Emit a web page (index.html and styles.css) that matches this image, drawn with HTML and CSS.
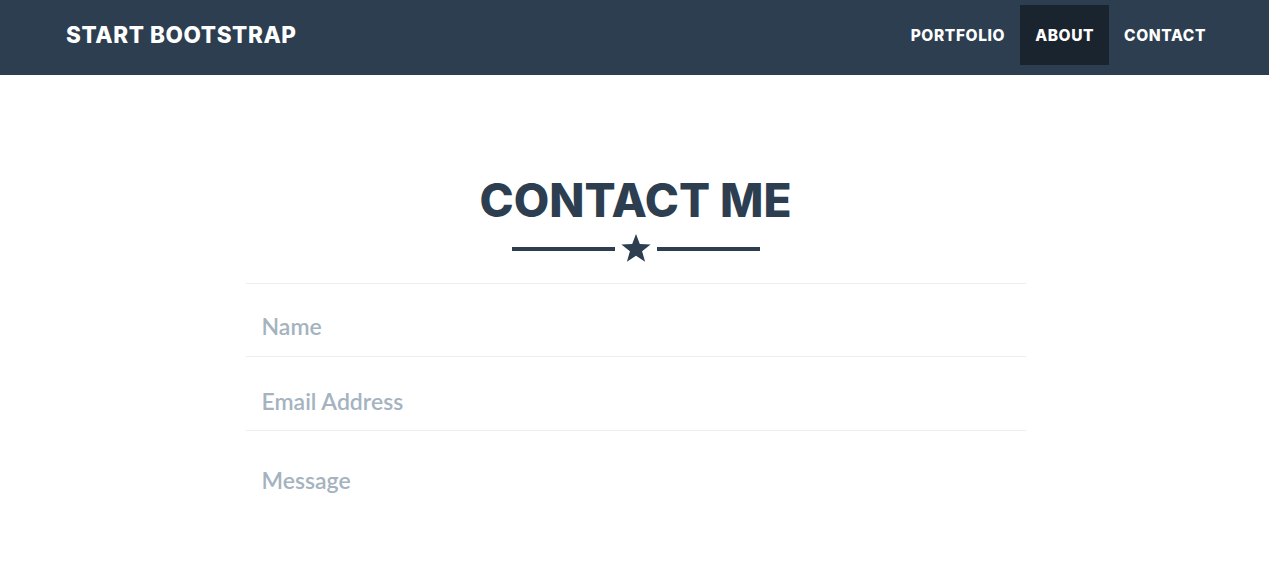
FILE: index.html
```html
<html>
<head>
  <title>Start Bootstrap - Contact</title>
  <meta name="viewport" content="width=device-width, minimum-scale=1.0"/>
  <meta http-equiv="Content-Type" content="text/html; charset=utf-8">
  <link rel="stylesheet" href="styles.css">
</head>
<body>
  <nav class="navbar">
    <a class="brand" href="#">Start Bootstrap</a>
    <ul class="nav-links">
      <li><a href="#portfolio">Portfolio</a></li>
      <li><a class="active" href="#about">About</a></li>
      <li><a href="#contact">Contact</a></li>
    </ul>
  </nav>
  <section class="contact">
    <h2>Contact Me</h2>
    <div class="star-divider">
      <span class="line"></span>
      <svg class="star" width="30" height="29" viewBox="0 0 30 29">
        <polygon points="15,0 18.8,10.1 29.6,10.6 21.1,17.3 24.1,27.8 15,21.8 5.9,27.8 8.9,17.3 0.4,10.6 11.2,10.1" fill="#2c3e50"/>
      </svg>
      <span class="line"></span>
    </div>
    <form class="contact-form">
      <div class="field"><input type="text" placeholder="Name"></div>
      <div class="field"><input type="email" placeholder="Email Address"></div>
      <div class="field last"><textarea placeholder="Message"></textarea></div>
    </form>
  </section>
</body>
</html>
```

FILE: styles.css
```css
html {
  box-sizing: border-box;
}
*, *:before, *:after {
  box-sizing: inherit;
}
body {
  margin: 0;
  padding: 0;
  font-family: "Lato", "Liberation Sans", sans-serif;
  background: #fff;
  overflow: hidden;
}
.navbar {
  height: 75px;
  background: #2c3e50;
  display: flex;
  align-items: center;
  justify-content: space-between;
  padding: 0 48px 0 66px;
}
.brand {
  font-family: "Inter", "Liberation Sans", sans-serif;
  font-weight: 800;
  font-size: 22.5px;
  letter-spacing: 0.6px;
  text-transform: uppercase;
  color: #fff;
  text-decoration: none;
  margin-top: -7px;
}
.nav-links {
  list-style: none;
  margin: 0;
  padding: 0;
  display: flex;
  align-items: center;
  height: 75px;
}
.nav-links a {
  display: block;
  height: 60px;
  line-height: 61px;
  padding: 0 15px;
  margin-top: -5px;
  font-family: "Inter", "Liberation Sans", sans-serif;
  font-weight: 800;
  font-size: 15.5px;
  letter-spacing: 0.6px;
  text-transform: uppercase;
  color: #fff;
  text-decoration: none;
}
.nav-links a.active {
  background: #1a242f;
}
.contact {
  width: 780px;
  margin: 0 auto;
  padding-top: 100px;
  position: relative;
  left: 1px;
}
.contact h2 {
  margin: 0;
  text-align: center;
  font-family: "Inter", "Liberation Sans", sans-serif;
  font-weight: 800;
  font-size: 46px;
  line-height: 50px;
  letter-spacing: 0;
  text-transform: uppercase;
  color: #2c3e50;
}
.star-divider {
  display: flex;
  justify-content: center;
  align-items: center;
  gap: 6px;
  margin-top: 9px;
  height: 30px;
}
.star-divider .line {
  width: 103px;
  height: 4px;
  background: #2c3e50;
}
.star {
  display: block;
  margin-top: -2px;
}
.contact-form {
  margin-top: 19px;
  border-top: 1px solid #eeeeee;
}
.field {
  height: 73px;
  border-bottom: 1px solid #eeeeee;
  display: flex;
  align-items: center;
  padding-top: 12px;
}
.field + .field {
  height: 74px;
  padding-top: 14px;
}
.field.last {
  border-bottom: none;
  align-items: flex-start;
  padding-top: 0;
}
.field input, .field textarea {
  width: 100%;
  border: none;
  outline: none;
  background: transparent;
  padding: 0 16px;
  font-family: "Lato", "Liberation Sans", sans-serif;
  font-size: 23px;
  font-weight: 600;
  color: #2c3e50;
  resize: none;
}
.field textarea {
  margin-top: 35px;
  height: 40px;
  line-height: 28px;
}
::placeholder {
  color: #a5b3c0;
  opacity: 1;
}
```
